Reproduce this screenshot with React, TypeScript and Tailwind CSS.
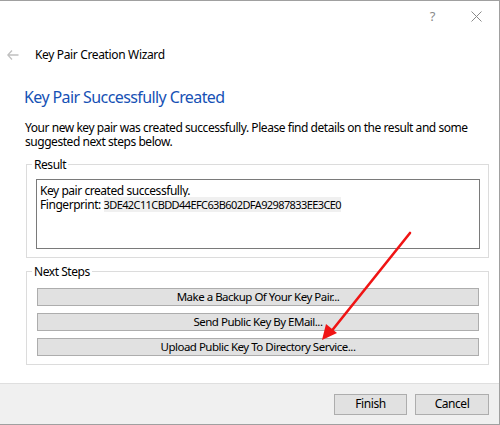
import React from 'react';

const font = { fontFamily: '"Noto Sans", "Liberation Sans", sans-serif' };

const stepButtons = [
  'Make a Backup Of Your Key Pair...',
  'Send Public Key By EMail...',
  'Upload Public Key To Directory Service...',
];

const App: React.FC = () => {
  return (
    <div
      className="relative flex h-[425px] w-[500px] flex-col border-t border-r border-b border-[#a0a0a0] bg-white text-[12px] leading-[14px] tracking-[-0.45px] text-black"
      style={font}
    >
      {/* title bar */}
      <div className="flex h-[30px] items-center justify-end pr-[17px] text-[#8a8a8a]">
        <span className="mr-[36px] text-[13px]">?</span>
        <svg width="11" height="11" viewBox="0 0 11 11" className="mt-[1px]">
          <path d="M0.5 0.5 L10.5 10.5 M10.5 0.5 L0.5 10.5" stroke="#8a8a8a" strokeWidth="1" />
        </svg>
      </div>

      {/* wizard header */}
      <div className="mt-[17px] flex h-[14px] items-center">
        <svg width="12" height="10" viewBox="0 0 12 10" className="ml-[7px] mr-[16px]">
          <path d="M5 0.5 L0.8 5 L5 9.5 M0.8 5 H11.5" stroke="#c0c0c0" strokeWidth="1.3" fill="none" />
        </svg>
        <span className="text-[12px] tracking-[-0.35px]">Key Pair Creation Wizard</span>
      </div>

      <div className="flex flex-1 flex-col pl-[24px] pr-[10px]">
        <h1 className="mt-[25px] text-[16px] leading-[20px] tracking-[-0.6px] text-[#1651b5]">
          Key Pair Successfully Created
        </h1>
        <p className="mt-[14px] pl-[1px]">
          Your new key pair was created successfully. Please find details on the result and some suggested next
          steps below.
        </p>

        <fieldset className="mt-[7px] ml-[2px] border border-[#dcdcdc]">
          <legend className="ml-[5px] px-[2px] pt-[2px]">Result</legend>
          <div className="mt-[7px] mb-[8px] ml-[9px] mr-[8px] h-[70px] border border-[#7a7a7a] px-[3px] pt-[4px]">
            <div>Key pair created successfully.</div>
            <div className="whitespace-nowrap">
              Fingerprint:{' '}
              <span className="bg-[#f0f0f0] text-[11px] tracking-[-0.6px]">
                3DE42C11CBDD44EFC63B602DFA92987833EE3CE0
              </span>
            </div>
          </div>
        </fieldset>

        <fieldset className="mt-[5px] ml-[2px] border border-[#dcdcdc]">
          <legend className="ml-[5px] px-[2px] pt-[2px]">Next Steps</legend>
          <div className="mt-[9px] mb-[8px] ml-[10px] mr-[9px] flex flex-col gap-[7px]">
            {stepButtons.map((label) => (
              <button
                key={label}
                type="button"
                className="h-[18px] border border-[#adadad] bg-[#e1e1e1] text-[11.5px] leading-[14px] tracking-[-0.5px]"
              >
                {label}
              </button>
            ))}
          </div>
        </fieldset>
      </div>

      {/* footer */}
      <div className="flex h-[41px] items-center justify-end gap-[8px] border-t border-[#dfdfdf] bg-[#f0f0f0] pr-[10px]">
        <button type="button" className="h-[21px] w-[73px] border border-[#adadad] bg-[#e1e1e1] tracking-[-0.45px]">
          Finish
        </button>
        <button type="button" className="h-[21px] w-[74px] border border-[#adadad] bg-[#e1e1e1] tracking-[-0.45px]">
          Cancel
        </button>
      </div>

      {/* red annotation arrow */}
      <svg className="pointer-events-none absolute left-0 top-0" width="500" height="425">
        <line x1="410" y1="232" x2="330" y2="332" stroke="#f01414" strokeWidth="2.6" strokeLinecap="round" />
        <path d="M322 339 L326 323 L337 332 Z" fill="#f01414" />
      </svg>
    </div>
  );
};

export default App;
